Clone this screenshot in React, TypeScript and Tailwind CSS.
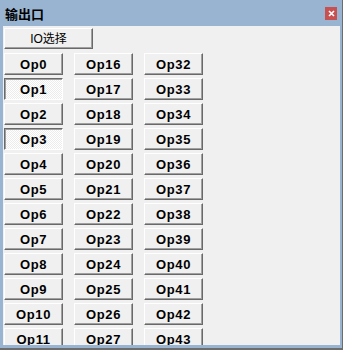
const ops = Array.from({ length: 12 }, (_, r) => [r, r + 16, r + 32]).flat()
const pressed = [1, 3]

function OpButton({ n }: { n: number }) {
  const down = pressed.includes(n)
  return (
    <button
      className={
        down
          ? 'h-[22px] w-[59px] border border-t-[#696969] border-l-[#696969] border-r-white border-b-white shadow-[inset_1px_1px_0_#a0a0a0] bg-[repeating-conic-gradient(#ffffff_0_25%,#ececec_0_50%)] bg-[length:2px_2px] text-[13px] font-bold tracking-[0.6px] text-black leading-none'
          : 'h-[22px] w-[59px] border border-t-white border-l-white border-r-[#696969] border-b-[#696969] shadow-[inset_-1px_-1px_0_#a0a0a0] bg-[#f0f0f0] text-[13px] font-bold tracking-[0.6px] text-black leading-none'
      }
    >
      Op{n}
    </button>
  )
}

export default function App() {
  return (
    <div
      className="w-[343px] h-[350px] bg-[#99b4d1] border-r border-b-2 border-[#6d6d6d] flex flex-col overflow-hidden"
      style={{ fontFamily: '"Liberation Sans", "Noto Sans CJK SC", sans-serif' }}
    >
      {/* Title bar */}
      <div className="h-[26px] shrink-0 flex items-center justify-between pl-[5px] pr-[5px]">
        <span
          className="text-[13px] font-bold text-black leading-none"
          style={{ fontFamily: '"Noto Sans CJK SC", sans-serif' }}
        >
          输出口
        </span>
        <div className="w-[12px] h-[13px] bg-[#c75050] flex items-center justify-center">
          <svg width="7" height="7" viewBox="0 0 7 7">
            <path d="M1 1 L6 6 M6 1 L1 6" stroke="white" strokeWidth="1.6" />
          </svg>
        </div>
      </div>

      {/* Content */}
      <div className="flex-1 ml-[3px] mr-[2px] mb-[3px] bg-[#f0f0f0] overflow-hidden pl-[1px] pt-[2px]">
        <button className="block h-[21px] w-[89px] border border-t-white border-l-white border-r-[#696969] border-b-[#696969] shadow-[inset_-1px_-1px_0_#a0a0a0] bg-[#f0f0f0] text-[12px] text-black leading-none">
          IO选择
        </button>
        <div className="mt-[4px] grid grid-cols-[59px_59px_59px] gap-x-[11px] gap-y-[3px]">
          {ops.map((n) => (
            <OpButton key={n} n={n} />
          ))}
        </div>
      </div>
    </div>
  )
}
